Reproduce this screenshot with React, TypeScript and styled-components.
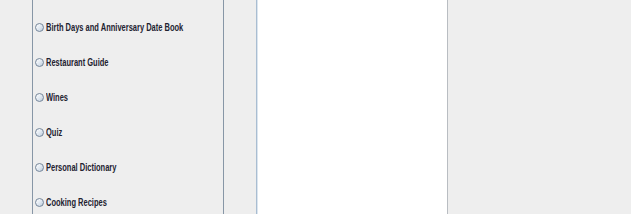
import styled, {createGlobalStyle} from 'styled-components'

const GlobalStyle = createGlobalStyle`
  html, body {
    margin: 0;
    padding: 0;
    background: #eeeeee;
    overflow: hidden;
  }
`

const Frame = styled.div`
  display: flex;
  height: 214px;
  width: 631px;
  padding-left: 32px;
  box-sizing: border-box;
  background: #eeeeee;
`

const MenuPanel = styled.div`
  width: 192px;
  box-sizing: border-box;
  border-left: 1px solid #8796a6;
  border-right: 1px solid #8796a6;
  padding: 10px 0 0 2px;
  display: flex;
  flex-direction: column;
  overflow: hidden;
`

const Gap = styled.div`
  width: 32px;
`

const PagePanel = styled.div`
  width: 192px;
  box-sizing: border-box;
  background: #ffffff;
  border-left: 1px solid #a9bdd1;
  border-right: 1px solid #b9bdc2;
  box-shadow: inset 1px 0 0 #dbe5ef;
`

const Row = styled.label`
  height: 35px;
  flex-shrink: 0;
  display: flex;
  align-items: center;
  gap: 2px;
  cursor: pointer;
`

const Radio = styled.span`
  width: 7px;
  height: 7px;
  border-radius: 50%;
  border: 1px solid #75869a;
  background: linear-gradient(135deg, #ffffff 0%, #dfe7f0 55%, #b9c8d8 100%);
  flex-shrink: 0;
`

const Caption = styled.span`
  font-family: "Liberation Sans", Arial, sans-serif;
  font-weight: bold;
  font-size: 10px;
  color: #222230;
  white-space: nowrap;
  display: inline-block;
  transform: scaleX(0.75);
  transform-origin: left center;
`

const items = [
    'Birth Days and Anniversary Date Book',
    'Restaurant Guide',
    'Wines',
    'Quiz',
    'Personal Dictionary',
    'Cooking Recipes',
]

export default function App() {
    return (
        <>
            <GlobalStyle/>
            <Frame>
                <MenuPanel>
                    {items.map(item => (
                        <Row key={item}>
                            <Radio/>
                            <Caption>{item}</Caption>
                        </Row>
                    ))}
                </MenuPanel>
                <Gap/>
                <PagePanel/>
            </Frame>
        </>
    )
}
